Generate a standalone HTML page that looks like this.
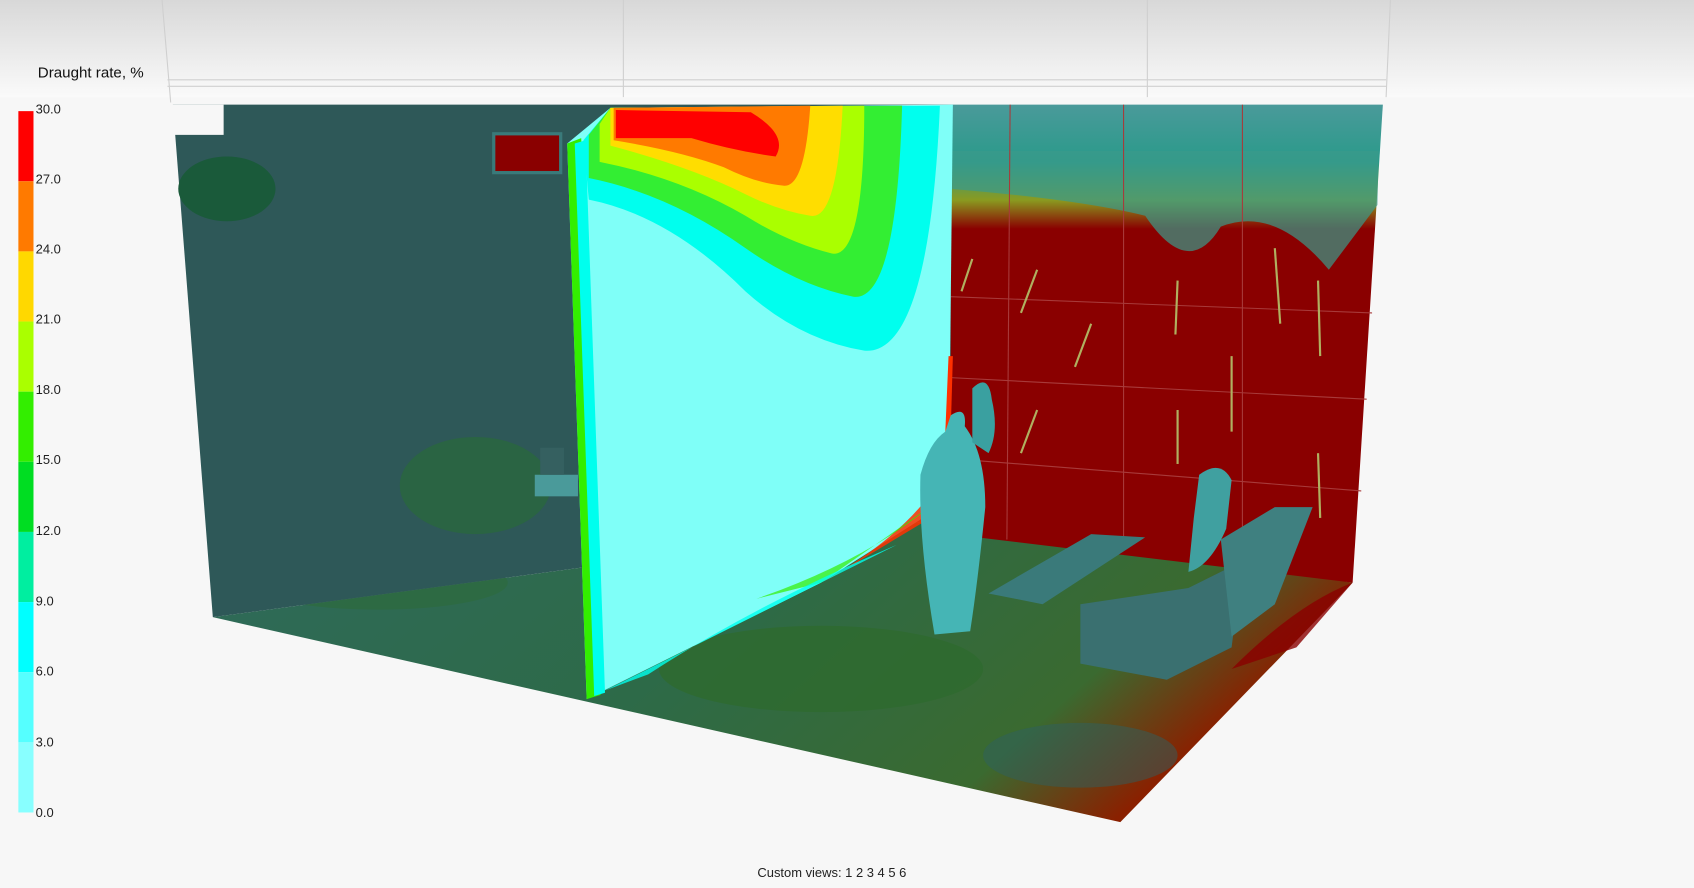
<!DOCTYPE html>
<html><head><meta charset="utf-8"><style>
html,body{margin:0;padding:0;width:1694px;height:888px;overflow:hidden;background:#f7f7f7}
svg{display:block}
text{font-family:"Liberation Sans",sans-serif}
</style></head><body>
<svg width="1694" height="888" viewBox="0 0 1568 823" preserveAspectRatio="none">
<defs>
<linearGradient id="top" x1="0" y1="0" x2="0" y2="1"><stop offset="0" stop-color="#d8d8d8"/><stop offset="1" stop-color="#fafafa"/></linearGradient>
<linearGradient id="rw" x1="0" y1="0" x2="0" y2="1"><stop offset="0" stop-color="#4a9a9a"/><stop offset="0.12" stop-color="#2a9a8a"/><stop offset="0.2" stop-color="#8a9a20"/><stop offset="0.26" stop-color="#8a0000"/><stop offset="1" stop-color="#8a0000"/></linearGradient>
<linearGradient id="fl" x1="0" y1="0" x2="1" y2="0.3"><stop offset="0" stop-color="#2f6a5a"/><stop offset="0.5" stop-color="#2d6a48"/><stop offset="0.85" stop-color="#3a6a30"/><stop offset="1" stop-color="#8a2000"/></linearGradient>
</defs>
<rect width="1568" height="90" fill="url(#top)"/>
<line x1="150" y1="0" x2="158" y2="95" stroke="#cfcfcf"/>
<line x1="577" y1="0" x2="577" y2="90" stroke="#cfcfcf"/>
<line x1="1062" y1="0" x2="1062" y2="90" stroke="#cfcfcf"/>
<line x1="1287" y1="0" x2="1283" y2="90" stroke="#cfcfcf"/>
<line x1="155" y1="74" x2="1283" y2="74" stroke="#d0d0d0"/><line x1="155" y1="80" x2="1283" y2="80" stroke="#d0d0d0"/>
<text x="35" y="72" font-size="14" fill="#111">Draught rate, %</text>
<g>
<rect x="17" y="103" width="14" height="65" fill="#ff0000"/>
<rect x="17" y="168" width="14" height="65" fill="#ff7a00"/>
<rect x="17" y="233" width="14" height="65" fill="#ffd800"/>
<rect x="17" y="298" width="14" height="65" fill="#aaff00"/>
<rect x="17" y="363" width="14" height="65" fill="#33ee00"/>
<rect x="17" y="428" width="14" height="65" fill="#00dd22"/>
<rect x="17" y="493" width="14" height="65" fill="#00eea0"/>
<rect x="17" y="558" width="14" height="65" fill="#00ffff"/>
<rect x="17" y="623" width="14" height="65" fill="#55ffff"/>
<rect x="17" y="688" width="14" height="65" fill="#88ffff"/>
</g>
<g font-size="12" fill="#222">
<text x="33" y="105">30.0</text><text x="33" y="170">27.0</text><text x="33" y="235">24.0</text><text x="33" y="300">21.0</text><text x="33" y="365">18.0</text><text x="33" y="430">15.0</text><text x="33" y="496">12.0</text><text x="33" y="561">9.0</text><text x="33" y="626">6.0</text><text x="33" y="692">3.0</text><text x="33" y="757">0.0</text>
</g>
<!-- floor -->
<polygon points="197,572 880,480 1252,540 1037,762" fill="url(#fl)"/>
<ellipse cx="760" cy="620" rx="150" ry="40" fill="#2e6a2e" opacity="0.8"/>
<ellipse cx="1000" cy="700" rx="90" ry="30" fill="#2e6060" opacity="0.5"/>
<ellipse cx="350" cy="540" rx="120" ry="25" fill="#2d6a40" opacity="0.8"/>
<path d="M1140,620 Q1200,560 1252,540 L1200,600Z" fill="#8a0000" opacity="0.8"/>
<!-- left wall -->
<polygon points="160,97 882,97 880,480 197,572" fill="#2e5858"/>
<rect x="158" y="97" width="49" height="28" fill="#f7f7f7"/>
<ellipse cx="210" cy="175" rx="45" ry="30" fill="#1a5a3a"/>
<ellipse cx="440" cy="450" rx="70" ry="45" fill="#2a6a3a" opacity="0.7"/>
<rect x="457" y="124" width="62" height="36" fill="#8a0000" stroke="#3a7a7a" stroke-width="3"/>
<!-- right wall -->
<polygon points="880,97 1280,97 1252,540 880,495" fill="url(#rw)"/>
<path d="M880,175 Q1000,185 1060,200 Q1100,260 1130,210 Q1180,190 1230,250 Q1260,210 1275,190 L1276,140 L880,140Z" fill="#3a9a8a" opacity="0.7"/>
<g stroke="#a83a3a" fill="none" stroke-width="1">
<line x1="935" y1="97" x2="932" y2="500"/><line x1="1040" y1="97" x2="1040" y2="510"/><line x1="1150" y1="97" x2="1150" y2="520"/>
<line x1="880" y1="275" x2="1270" y2="290"/><line x1="880" y1="350" x2="1265" y2="370"/><line x1="880" y1="425" x2="1260" y2="455"/>
</g>
<g stroke="#b0b060" stroke-width="2">
<line x1="900" y1="240" x2="890" y2="270"/><line x1="960" y1="250" x2="945" y2="290"/><line x1="1010" y1="300" x2="995" y2="340"/><line x1="1090" y1="260" x2="1088" y2="310"/><line x1="1180" y1="230" x2="1185" y2="300"/><line x1="1220" y1="260" x2="1222" y2="330"/><line x1="1140" y1="330" x2="1140" y2="400"/><line x1="960" y1="380" x2="945" y2="420"/><line x1="1090" y1="380" x2="1090" y2="430"/><line x1="1220" y1="420" x2="1222" y2="480"/>
</g>
<!-- slice -->
<polygon points="525,133 565,100 882,97 878,465 760,540 543,648" fill="#7ffff8"/>
<polygon points="525,133 538,128 556,644 543,648" fill="#33ee00"/>
<polygon points="532,133 542,130 560,642 550,645" fill="#00ffee"/>
<path d="M540,130 L565,100 L870,98 Q860,330 800,325 Q740,315 690,270 Q620,200 545,185Z" fill="#00ffee"/>
<path d="M545,125 L565,100 L835,98 Q830,280 790,275 Q740,265 690,230 Q620,180 545,165Z" fill="#33ee33"/>
<path d="M555,115 L565,100 L800,98 Q800,240 770,235 Q730,225 690,200 Q630,165 555,150Z" fill="#aaff00"/>
<path d="M565,100 L780,98 Q775,205 750,200 Q720,195 690,180 Q640,155 565,135Z" fill="#ffdd00"/>
<path d="M568,100 L750,98 Q745,175 725,172 Q700,170 670,155 Q630,140 568,130Z" fill="#ff7a00"/>
<path d="M570,102 L695,104 Q730,125 718,145 Q680,140 640,128 L570,128Z" fill="#ff0000"/>
<path d="M878,330 L882,330 L878,470 L872,470Z" fill="#ff3000"/>
<path d="M760,540 Q850,490 878,430 L878,470 L770,535Z" fill="#ff3000" opacity="0.85"/>
<path d="M700,555 Q800,520 860,470 L760,540Z" fill="#33ee00" opacity="0.7"/>
<path d="M600,625 Q700,560 830,505 L760,540 L560,640Z" fill="#00ffee" opacity="0.8"/>
<!-- furniture -->
<polygon points="915,550 1010,495 1060,498 965,560" fill="#3a7a7a"/>
<polygon points="1000,560 1100,545 1150,520 1140,600 1080,630 1000,615" fill="#3a7070"/>
<polygon points="1130,500 1180,470 1215,470 1180,560 1140,590" fill="#3f8080"/>
<path d="M1110,440 Q1130,425 1140,445 L1135,490 Q1120,525 1100,530 L1105,480Z" fill="#40a0a0"/>
<rect x="495" y="440" width="40" height="20" fill="#4a9a9a"/><rect x="500" y="415" width="22" height="25" fill="#356060"/>
<path d="M880,385 Q895,375 893,395 Q912,420 912,470 Q905,540 898,585 L865,588 Q850,500 852,440 Q860,410 875,400Z" fill="#45b5b5"/>
<path d="M900,360 Q915,345 918,370 Q925,400 915,420 L900,410Z" fill="#3aa0a0"/>
<text x="770" y="813" font-size="12" fill="#222" text-anchor="middle">Custom views: 1 2 3 4 5 6</text>
</svg>
</body></html>
